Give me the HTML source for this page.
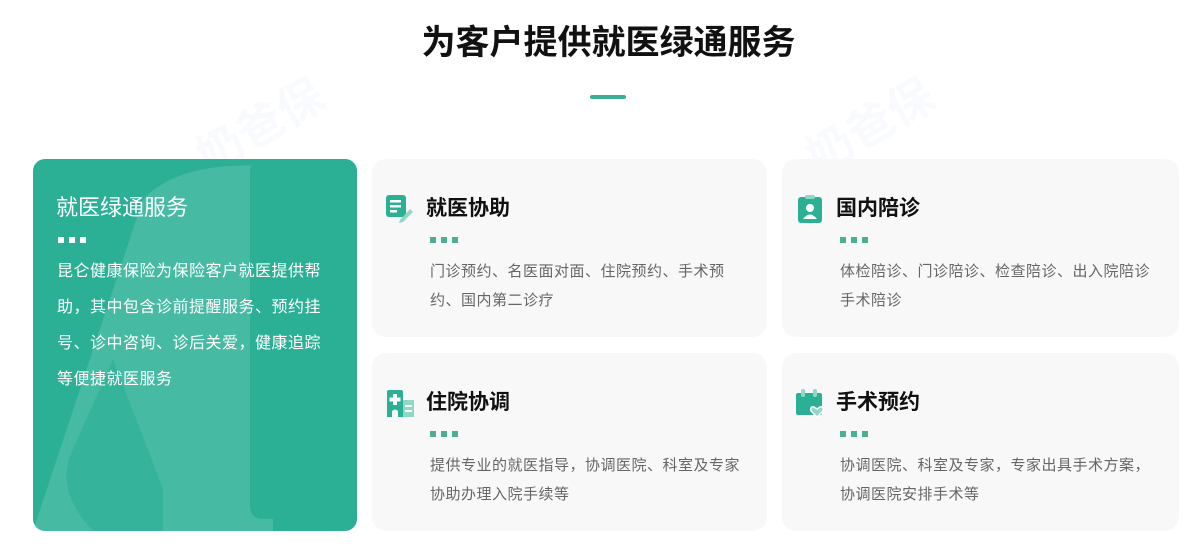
<!DOCTYPE html>
<html><head><meta charset="utf-8"><style>
*{margin:0;padding:0;box-sizing:border-box}
body{width:1197px;height:551px;background:#fff;font-family:"Liberation Sans","Noto Sans CJK SC",sans-serif;position:relative;overflow:hidden}
h1{position:absolute;top:20px;left:0;width:1217px;text-align:center;font-size:34px;font-weight:bold;color:#111;line-height:46px}
.bar{position:absolute;left:590px;top:95px;width:36px;height:4px;border-radius:2px;background:#3aaf95}
.left{position:absolute;left:33px;top:159px;width:324px;height:372px;border-radius:12px;background:#2bb096;overflow:hidden}
.left .t{position:absolute;left:23px;top:35px;font-size:22px;color:#fff;line-height:28px}
.dots{position:absolute;display:flex;gap:5px}
.dots i{display:block;width:6px;height:6px}
.left .d{left:25px;top:78px}
.left .d i{background:#fff}
.left p{position:absolute;left:24px;top:95px;white-space:nowrap;font-size:16px;letter-spacing:0.5px;line-height:36px;color:#fff}
.card{position:absolute;background:#f8f8f8;border-radius:14px}
.card .ic{position:absolute;left:14px;top:36px;width:28px;height:28px}
.card .t{position:absolute;left:54px;top:36px;font-size:21px;font-weight:bold;color:#111;line-height:28px}
.card .d{left:58px;top:78px}
.card .d i{background:#4cae92}
.card p{position:absolute;left:58px;top:98px;white-space:nowrap;font-size:15px;letter-spacing:0.5px;line-height:29px;color:#666}
.wm{position:absolute;font-size:46px;font-weight:bold;color:rgba(150,180,220,0.07);transform:rotate(-30deg)}
</style></head><body>
<div class="wm" style="left:190px;top:90px">奶爸保</div>
<div class="wm" style="left:800px;top:90px">奶爸保</div>
<div class="wm" style="left:800px;top:400px">奶爸保</div>
<h1>为客户提供就医绿通服务</h1>
<div class="bar"></div>
<div class="left">
<svg width="324" height="372" style="position:absolute;left:0;top:0">
<path d="M0 372 L110 40 Q150 0 240 8 L240 372 Z" fill="rgba(255,255,255,0.13)"/>
<path d="M60 372 Q20 330 40 290 L80 200 L130 330 L130 372Z" fill="rgba(43,176,150,0.6)"/>
<rect x="217" y="0" width="107" height="360" rx="12" fill="#2bb096"/>
</svg>
<div class="t">就医绿通服务</div>
<div class="dots d"><i></i><i></i><i></i></div>
<p>昆仑健康保险为保险客户就医提供帮<br>助，其中包含诊前提醒服务、预约挂<br>号、诊中咨询、诊后关爱，健康追踪<br>等便捷就医服务</p>
</div>

<div class="card" style="left:372px;top:159px;width:395px;height:178px">
<svg class="ic" viewBox="0 0 28 28"><rect x="0" y="0" width="20" height="22" rx="3" fill="#2bb096"/><rect x="4" y="5" width="11" height="2.5" fill="#fff"/><rect x="4" y="10" width="11" height="2.5" fill="#fff"/><rect x="4" y="15" width="7" height="2.5" fill="#fff"/><path d="M14 25 L24 14 L27 17 L17 27 L13 28Z" fill="#8fd8c4"/></svg>
<div class="t">就医协助</div>
<div class="dots d"><i></i><i></i><i></i></div>
<p>门诊预约、名医面对面、住院预约、手术预<br>约、国内第二诊疗</p>
</div>

<div class="card" style="left:782px;top:159px;width:397px;height:178px">
<svg class="ic" viewBox="0 0 28 28"><rect x="2" y="2" width="24" height="26" rx="3" fill="#2bb096"/><rect x="9" y="0" width="10" height="4" rx="2" fill="#8fd8c4"/><circle cx="14" cy="13" r="4" fill="#fff"/><path d="M7 24 Q14 15 21 24Z" fill="#fff"/></svg>
<div class="t">国内陪诊</div>
<div class="dots d"><i></i><i></i><i></i></div>
<p>体检陪诊、门诊陪诊、检查陪诊、出入院陪诊<br>手术陪诊</p>
</div>

<div class="card" style="left:372px;top:353px;width:395px;height:178px">
<svg class="ic" viewBox="0 0 28 28"><path d="M1 28 V3 Q1 1 3 1 H15 Q17 1 17 3 V28 H12 V22 Q9 19 6 22 V28Z" fill="#2bb096"/><rect x="7" y="5" width="4" height="11" fill="#fff"/><rect x="3.5" y="8.5" width="11" height="4" fill="#fff"/><rect x="17" y="11" width="11" height="17" fill="#8fd8c4"/><rect x="19" y="16" width="7" height="2" fill="#fff"/><rect x="19" y="21" width="7" height="2" fill="#fff"/></svg>
<div class="t">住院协调</div>
<div class="dots d"><i></i><i></i><i></i></div>
<p>提供专业的就医指导，协调医院、科室及专家<br>协助办理入院手续等</p>
</div>

<div class="card" style="left:782px;top:353px;width:397px;height:178px">
<svg class="ic" viewBox="0 0 28 28"><rect x="0" y="4" width="26" height="22" rx="2" fill="#2bb096"/><rect x="5" y="0" width="4" height="8" rx="2" fill="#8fd8c4"/><rect x="17" y="0" width="4" height="8" rx="2" fill="#8fd8c4"/><path d="M21 28 L15 22 Q14 17 18 18 L21 20 L24 18 Q28 17 27 22Z" fill="#8fd8c4" stroke="#fff" stroke-width="1.5"/></svg>
<div class="t">手术预约</div>
<div class="dots d"><i></i><i></i><i></i></div>
<p>协调医院、科室及专家，专家出具手术方案，<br>协调医院安排手术等</p>
</div>
</body></html>
